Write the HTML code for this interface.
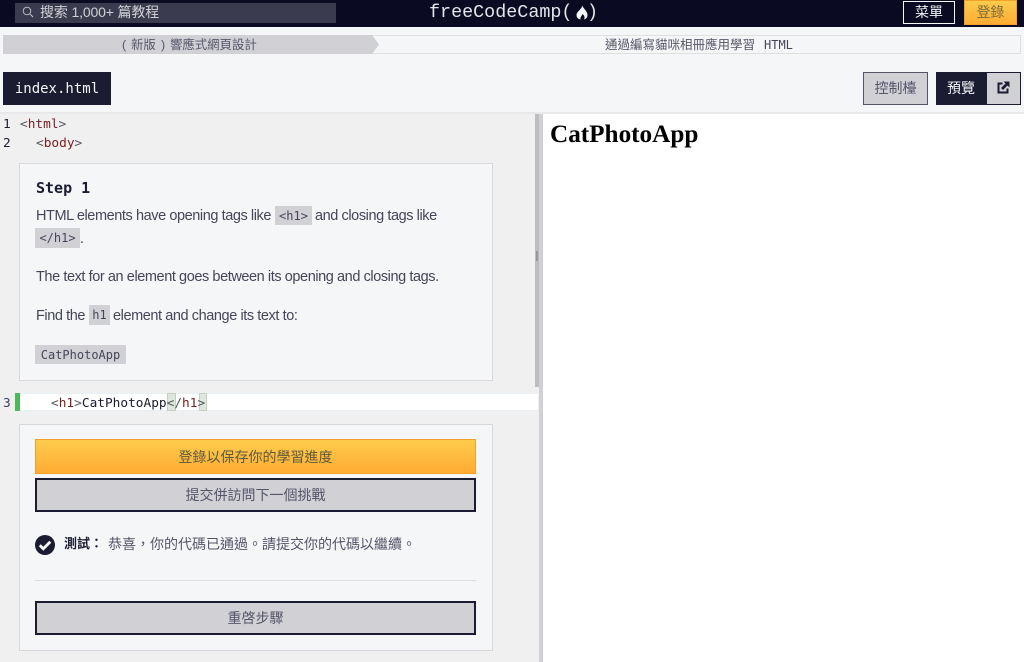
<!DOCTYPE html>
<html lang="zh-TW">
<head>
<meta charset="utf-8">
<title>freeCodeCamp</title>
<style>
html,body{margin:0;padding:0;width:1024px;height:662px;overflow:hidden;background:#f5f6f7;}
body{position:relative;font-family:"Liberation Sans","Noto Sans CJK TC",sans-serif;color:#3b3b4f;}
.a{position:absolute;box-sizing:border-box;}
.t{position:absolute;white-space:pre;}
.m{font-family:"DejaVu Sans Mono","Noto Sans CJK TC",monospace;}
.l{font-family:"Liberation Mono",monospace;}
.c{text-align:center;}
.p{font-size:14.5px;letter-spacing:-.42px;line-height:20px;color:#45455a;}
.k{background:#d0d0d5;font-size:12px;color:#45455a;}
.tag{color:#555;}
.nm{color:#7b2020;}
.btn{background:#d0d0d5;border:2px solid #1b1b32;color:#55556a;font-size:14px;text-align:center;}
</style>
</head>
<body>
<!-- Nav -->
<div class="a" style="left:0;top:0;width:1024px;height:27px;background:#0a0a23;"></div>
<div class="a" style="left:15px;top:3px;width:321px;height:20px;background:#3b3b4f;"></div>
<svg class="a" style="left:22px;top:6px;" width="12" height="12" viewBox="0 0 12 12"><circle cx="5" cy="5" r="3.8" fill="none" stroke="#c4c4cc" stroke-width=".9"/><path d="M8 8l3 3" stroke="#c4c4cc" stroke-width="1"/></svg>
<div class="t" style="left:40px;top:2px;line-height:20px;font-size:14px;letter-spacing:-.15px;color:#d0d0d5;">搜索 1,000+ 篇教程</div>
<div class="t l" style="left:429px;top:2px;line-height:22px;font-size:18.4px;color:#e4e5e8;">freeCodeCamp(</div>
<svg class="a" style="left:576px;top:5px;" width="12" height="15" viewBox="0 0 12 15"><path d="M6.500 .5C7 3.500 11.500 6 11.500 10C11.500 12.500 10 14 8 14.500C9 12.500 8.500 10.500 6.500 9C6 11 4 11.500 4.500 14.500C2 14 .5 12.500 .5 10C.5 6.500 5.500 4.500 6.500 .5Z" fill="#f5f6f7"/></svg>
<div class="t l" style="left:587px;top:2px;line-height:22px;font-size:18.4px;color:#e4e5e8;">)</div>
<div class="a c" style="left:903px;top:1px;width:52px;height:23px;border:1px solid #f5f6f7;background:#0a0a23;color:#f5f6f7;font-size:14px;line-height:21px;">菜單</div>
<div class="a c" style="left:964px;top:0;width:53px;height:25px;background:linear-gradient(#fecc4c,#ffac33);border:1px solid #f1a02a;color:#7a6a3a;font-size:14px;line-height:23px;">登錄</div>

<!-- Breadcrumbs -->
<div class="a" style="left:372px;top:35px;width:649px;height:19px;border:1px solid #dfdfe2;background:#f5f6f7;"></div>
<div class="a" style="left:3px;top:35px;width:376px;height:19px;background:#d0d0d5;clip-path:polygon(0 0,369px 0,376px 50%,369px 100%,0 100%);"></div>
<div class="t" style="left:122px;top:35px;line-height:20px;font-size:12.4px;color:#55556a;">(</div>
<div class="t" style="left:131px;top:35px;line-height:20px;font-size:12.4px;color:#55556a;">新版</div>
<div class="t" style="left:161px;top:35px;line-height:20px;font-size:12.4px;color:#55556a;">)</div>
<div class="t" style="left:170px;top:35px;line-height:20px;font-size:12.4px;color:#55556a;">響應式網頁設計</div>
<div class="t" style="left:605px;top:35px;line-height:20px;font-size:12.5px;color:#55556a;">通過編寫貓咪相冊應用學習</div>
<div class="t m" style="left:764px;top:35px;line-height:20px;font-size:12px;color:#45455a;">HTML</div>

<!-- Toolbar -->
<div class="a" style="left:0;top:112px;width:1024px;height:2px;background:#e8e8ea;"></div>
<div class="a m c" style="left:3px;top:72px;width:108px;height:33px;background:#1b1b32;color:#f5f6f7;font-size:14px;line-height:34px;">index.html</div>
<div class="a c" style="left:863px;top:72px;width:65px;height:33px;background:#d0d0d5;border:1px solid #555566;color:#55556a;font-size:14px;line-height:31px;">控制檯</div>
<div class="a c" style="left:936px;top:72px;width:51px;height:33px;padding-right:1px;background:#1b1b32;color:#f5f6f7;font-size:14px;line-height:32px;">預覽</div>
<div class="a" style="left:987px;top:72px;width:34px;height:33px;background:#d0d0d5;border:1px solid #1b1b32;border-left:0;"></div>
<svg class="a" style="left:997px;top:81px;" width="13" height="13" viewBox="0 0 13 13"><path d="M5.500 2.500H1.500V11.500H10.500V7.500" fill="none" stroke="#1b1b32" stroke-width="2"/><path d="M6.500 .5H12.500V6.500L10.500 4.500L6 9L4 7L8.500 2.500Z" fill="#1b1b32"/></svg>

<!-- Editor -->
<div class="a" style="left:0;top:114px;width:535px;height:548px;background:#f0f0f0;"></div>
<div class="a" style="left:535px;top:114px;width:5px;height:273px;background:#bdbdbd;"></div>
<div class="a" style="left:535px;top:387px;width:5px;height:275px;background:#f0f0f0;"></div>
<div class="a" style="left:539px;top:114px;width:4px;height:548px;background:#d0d0d5;"></div>
<div class="a" style="left:536px;top:251px;width:2px;height:10px;background:#999;"></div>
<div class="a" style="left:543px;top:114px;width:481px;height:548px;background:#fff;"></div>

<div class="t m" style="left:3px;top:115px;line-height:19px;font-size:12.8px;color:#1b1b32;">1</div>
<div class="t m" style="left:20px;top:115px;line-height:19px;font-size:12.8px;"><span class="tag">&lt;</span><span class="nm">html</span><span class="tag">&gt;</span></div>
<div class="t m" style="left:3px;top:134px;line-height:19px;font-size:12.8px;color:#1b1b32;">2</div>
<div class="t m" style="left:36px;top:134px;line-height:19px;font-size:12.8px;"><span class="tag">&lt;</span><span class="nm">body</span><span class="tag">&gt;</span></div>

<!-- Step card -->
<div class="a" style="left:19px;top:163px;width:474px;height:218px;background:#f5f6f7;border:1px solid #d8d8dc;"></div>
<div class="t m" style="left:36px;top:178px;line-height:20px;font-size:15px;font-weight:700;color:#1b1b32;">Step 1</div>
<div class="t p" style="left:36px;top:206px;">HTML elements have opening tags like</div>
<div class="a m c k" style="left:275px;top:206px;width:37px;height:19px;line-height:20px;">&lt;h1&gt;</div>
<div class="t p" style="left:315px;top:206px;">and closing tags like</div>
<div class="a m c k" style="left:35px;top:228px;width:45px;height:20px;line-height:21px;">&lt;/h1&gt;</div>
<div class="t p" style="left:80px;top:229px;">.</div>
<div class="t p" style="left:36px;top:267px;">The text for an element goes between its opening and closing tags.</div>
<div class="t p" style="left:36px;top:306px;">Find the</div>
<div class="a m c k" style="left:89px;top:305px;width:21px;height:20px;line-height:21px;">h1</div>
<div class="t p" style="left:113px;top:306px;">element and change its text to:</div>
<div class="a m c k" style="left:35px;top:345px;width:91px;height:19px;line-height:20px;">CatPhotoApp</div>

<!-- Line 3 -->
<div class="a" style="left:20px;top:393px;width:518px;height:18px;background:#fff;border-top:1px solid #e6f0f5;border-bottom:1px solid #e6f0f5;"></div>
<div class="a" style="left:15px;top:393px;width:5px;height:18px;background:#4cb85c;"></div>
<div class="t m" style="left:3px;top:394px;line-height:19px;font-size:12.8px;color:#3b3b6f;">3</div>
<div class="a" style="left:167px;top:393px;width:9px;height:18px;background:#dde7dd;border:1px solid #c4d0c4;"></div>
<div class="a" style="left:199px;top:393px;width:8px;height:18px;background:#dde7dd;border:1px solid #c4d0c4;"></div>
<div class="t m" style="left:51px;top:394px;line-height:19px;font-size:12.8px;color:#1b1b32;"><span class="tag">&lt;</span><span class="nm">h1</span><span class="tag">&gt;</span>CatPhotoApp<span class="tag">&lt;/</span><span class="nm">h1</span><span class="tag">&gt;</span></div>

<!-- Action card -->
<div class="a" style="left:19px;top:424px;width:474px;height:227px;background:#f5f6f7;border:1px solid #d8d8dc;"></div>
<div class="a c" style="left:35px;top:439px;width:441px;height:35px;background:linear-gradient(#fecc4c,#ffac33);border:1px solid #f1a02a;color:#5c5a3e;font-size:14px;line-height:34px;">登錄以保存你的學習進度</div>
<div class="a btn" style="left:35px;top:478px;width:441px;height:34px;line-height:30px;">提交併訪問下一個挑戰</div>
<svg class="a" style="left:35px;top:535px;" width="20" height="20" viewBox="0 0 20 20"><circle cx="10" cy="10" r="10" fill="#1b1b32"/><path d="M4.800 10.300L8.300 13.800L15.300 6.800" fill="none" stroke="#f5f6f7" stroke-width="2.800"/></svg>
<div class="t" style="left:64px;top:534px;line-height:20px;font-size:13px;font-weight:700;color:#1b1b32;">測試：</div>
<div class="t" style="left:108px;top:534px;line-height:20px;font-size:14px;color:#55556a;">恭喜，你的代碼已通過。請提交你的代碼以繼續。</div>
<div class="a" style="left:35px;top:580px;width:441px;height:1px;background:#dfdfe2;"></div>
<div class="a btn" style="left:35px;top:601px;width:441px;height:34px;line-height:30px;">重啓步驟</div>

<!-- Preview -->
<div class="t" style="left:550px;top:121px;line-height:28px;font-family:'Liberation Serif',serif;font-size:25.2px;font-weight:700;color:#000;">CatPhotoApp</div>
</body>
</html>
